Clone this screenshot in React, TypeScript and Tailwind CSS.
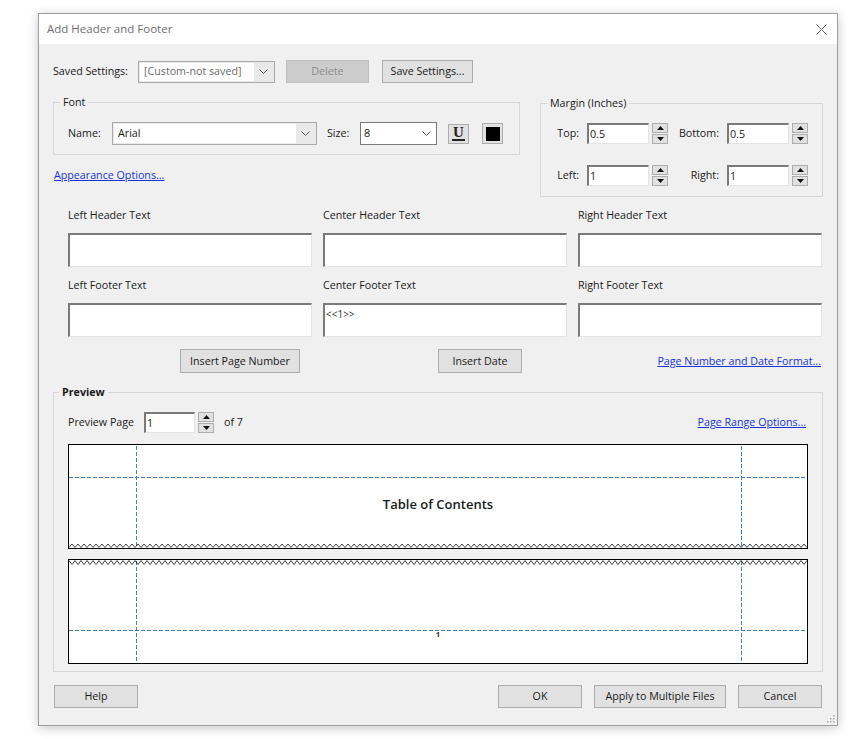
import React from 'react';

const inset =
  'border-t-2 border-l-2 border-r border-b border-t-[#7a7a7a] border-l-[#7a7a7a] border-r-[#e3e3e3] border-b-[#e3e3e3] bg-white';

function Chevron() {
  return (
    <svg width="9" height="5" viewBox="0 0 9 5">
      <path d="M0.5 0.5 L4.5 4.5 L8.5 0.5" fill="none" stroke="#5a5a5a" strokeWidth="1" />
    </svg>
  );
}

function Btn({
  children,
  className = '',
  disabled = false,
}: {
  children?: React.ReactNode;
  className?: string;
  disabled?: boolean;
}) {
  return (
    <button
      className={`flex items-center justify-center border leading-none ${
        disabled
          ? 'border-[#bfbfbf] bg-[#cccccc] text-[#8c8c8c]'
          : 'border-[#adadad] bg-[#e1e1e1] text-[#1a1a1a]'
      } ${className}`}
    >
      {children}
    </button>
  );
}

function Spinner() {
  return (
    <div className="ml-[3px] flex h-[21px] w-[16px] flex-col justify-between">
      <div className="flex h-[10px] items-center justify-center border border-[#adadad] bg-[#e1e1e1]">
        <svg width="7" height="4" viewBox="0 0 7 4">
          <path d="M3.5 0 L7 4 L0 4Z" fill="#111" />
        </svg>
      </div>
      <div className="flex h-[10px] items-center justify-center border border-[#adadad] bg-[#e1e1e1]">
        <svg width="7" height="4" viewBox="0 0 7 4">
          <path d="M0 0 L7 0 L3.5 4Z" fill="#111" />
        </svg>
      </div>
    </div>
  );
}

function MarginField({ label, value, labelW }: { label: string; value: string; labelW: string }) {
  return (
    <div className="flex items-center">
      <span className={`${labelW} text-right`}>{label}</span>
      <div className={`ml-[8px] flex h-[21px] w-[62px] items-center pl-[1px] ${inset}`}>{value}</div>
      <Spinner />
    </div>
  );
}

function TextBox({ label, value = '' }: { label: string; value?: string }) {
  return (
    <div className="flex flex-col">
      <span className="leading-[15px]">{label}</span>
      <div className={`mt-[10px] h-[34px] pl-[1px] pt-[2px] text-[10px] leading-[14px] text-[#333] ${inset}`}>
        {value}
      </div>
    </div>
  );
}

function zig(width: number, base: number, tip: number, period: number) {
  let d = `M0 ${base}`;
  for (let x = 0; x < width; x += period) {
    d += ` L${x + period / 2} ${tip} L${x + period} ${base}`;
  }
  return d;
}

function PreviewPage({ top }: { top: boolean }) {
  const dash = { stroke: '#4b80b3', strokeWidth: 1, strokeDasharray: '4 2' };
  const hy = top ? 32.5 : 70.5;
  return (
    <div className="relative ml-[14px] h-[105px] w-[740px] border border-black bg-white">
      <svg className="absolute inset-0" width="738" height="103">
        <line x1="0" y1={hy} x2="738" y2={hy} {...dash} />
        <line x1="67.5" y1="1" x2="67.5" y2="103" {...dash} />
        <line x1="672.5" y1="1" x2="672.5" y2="103" {...dash} />
        {top ? (
          <path d={zig(738, 102.5, 99, 6)} fill="none" stroke="#111" strokeWidth="0.8" />
        ) : (
          <path d={zig(738, 0.5, 4.5, 6)} fill="none" stroke="#111" strokeWidth="0.8" />
        )}
      </svg>
      {top ? (
        <div className="relative pt-[50px] text-center text-[13px] font-semibold leading-[18px] text-[#1a1a1a]">
          Table of Contents
        </div>
      ) : (
        <div className="relative pt-[71px] text-center text-[7px] font-bold leading-[8px] text-[#222]">1</div>
      )}
    </div>
  );
}

export default function App() {
  return (
    <div className="h-[739px] w-[860px] bg-white pl-[38px] pt-[13px] font-['Open_Sans',sans-serif] text-[10.7px] text-[#1a1a1a]">
      <div className="relative flex h-[713px] w-[800px] flex-col overflow-hidden border border-[#9d9d9d] bg-[#f0f0f0] shadow-[0_2px_10px_rgba(0,0,0,0.22)]">
        {/* Title bar */}
        <div className="flex h-[30px] shrink-0 items-center justify-between bg-white pl-[8px] pr-[10px]">
          <span className="text-[11.5px] text-[#6f6f6f]">Add Header and Footer</span>
          <svg width="11" height="11" viewBox="0 0 11 11">
            <path d="M0.5 0.5 L10.5 10.5 M10.5 0.5 L0.5 10.5" stroke="#6a6a6a" strokeWidth="1" />
          </svg>
        </div>

        <div className="flex flex-col px-[14px] pt-[16px]">
          {/* Saved settings */}
          <div className="flex h-[23px] items-center">
            <span className="w-[85px]">Saved Settings:</span>
            <div className="flex h-[22px] w-[137px] items-stretch border border-[#a9a9a9] bg-[#e9e9e9] p-[1px]">
              <div className="flex flex-1 items-center bg-white pl-[4px] text-[#6b6b6b]">[Custom-not saved]</div>
              <div className="flex w-[19px] items-center justify-center">
                <Chevron />
              </div>
            </div>
            <Btn disabled className="ml-[11px] h-[23px] w-[83px]">
              Delete
            </Btn>
            <Btn className="ml-[13px] h-[23px] w-[91px]">Save Settings...</Btn>
          </div>

          {/* Font + Margin */}
          <div className="mt-[12px] flex items-start">
            <div className="flex w-[467px] flex-col">
              <fieldset className="border border-[#d6d6d6] pb-[9px] pt-[13px]">
                <legend className="ml-[6px] px-[3px] leading-[14px]">Font</legend>
                <div className="flex items-center pl-[14px]">
                  <span className="w-[44px]">Name:</span>
                  <div className="flex h-[23px] w-[205px] items-stretch border border-[#a9a9a9] bg-[#e9e9e9] p-[1px]">
                    <div className="flex flex-1 items-center bg-white pl-[4px]">Arial</div>
                    <div className="flex w-[19px] items-center justify-center">
                      <Chevron />
                    </div>
                  </div>
                  <span className="ml-[10px] w-[33px]">Size:</span>
                  <div className="flex h-[23px] w-[77px] items-center justify-between border border-[#7a7a7a] bg-white pl-[3px] pr-[5px]">
                    <span>8</span>
                    <Chevron />
                  </div>
                  <Btn className="ml-[11px] h-[20px] w-[21px] flex-col">
                    <span className="font-['Liberation_Serif',serif] text-[15px] font-bold leading-[12px] text-[#222]">U</span>
                    <span className="mt-[1px] h-[2px] w-[13px] bg-[#222]" />
                  </Btn>
                  <Btn className="ml-[13px] h-[21px] w-[21px]">
                    <span className="h-[14px] w-[14px] bg-black" />
                  </Btn>
                </div>
              </fieldset>
              <a className="mt-[13px] ml-[1px] self-start leading-[15px] text-[#1a33d6] underline">Appearance Options...</a>
            </div>

            <fieldset className="ml-auto mt-[1px] w-[283px] border border-[#d6d6d6] pb-[10px] pt-[13px]">
              <legend className="ml-[6px] px-[3px] leading-[14px]">Margin (Inches)</legend>
              <div className="flex">
                <MarginField label="Top:" value="0.5" labelW="w-[38px]" />
                <MarginField label="Bottom:" value="0.5" labelW="w-[51px]" />
              </div>
              <div className="mt-[21px] flex">
                <MarginField label="Left:" value="1" labelW="w-[38px]" />
                <MarginField label="Right:" value="1" labelW="w-[51px]" />
              </div>
            </fieldset>
          </div>

          {/* Header / footer text */}
          <div className="mt-[11px] grid grid-cols-3 gap-x-[11px] pl-[15px] pr-[1px]">
            <TextBox label="Left Header Text" />
            <TextBox label="Center Header Text" />
            <TextBox label="Right Header Text" />
          </div>
          <div className="mt-[11px] grid grid-cols-3 gap-x-[11px] pl-[15px] pr-[1px]">
            <TextBox label="Left Footer Text" />
            <TextBox label="Center Footer Text" value="<<1>>" />
            <TextBox label="Right Footer Text" />
          </div>

          <div className="mt-[12px] flex h-[24px] items-center pl-[15px] pr-[2px]">
            <Btn className="ml-[112px] h-[24px] w-[120px]">Insert Page Number</Btn>
            <Btn className="ml-[138px] h-[24px] w-[84px]">Insert Date</Btn>
            <a className="ml-auto leading-[15px] text-[#1a33d6] underline">Page Number and Date Format...</a>
          </div>

          {/* Preview */}
          <fieldset className="mt-[12px] border border-[#d6d6d6] pb-[7px] pt-[13px]">
            <legend className="ml-[5px] px-[3px] font-bold leading-[14px]">Preview</legend>
            <div className="flex h-[21px] items-center pl-[14px] pr-[16px]">
              <span className="w-[76px]">Preview Page</span>
              <div className={`flex h-[21px] w-[51px] items-center pl-[1px] ${inset}`}>1</div>
              <Spinner />
              <span className="ml-[10px]">of 7</span>
              <a className="ml-auto leading-[15px] text-[#1a33d6] underline">Page Range Options...</a>
            </div>
            <div className="mt-[11px]">
              <PreviewPage top />
            </div>
            <div className="mt-[10px]">
              <PreviewPage top={false} />
            </div>
          </fieldset>

          {/* Bottom buttons */}
          <div className="mt-[13px] flex h-[23px] items-center pl-[1px] pr-[1px]">
            <Btn className="h-[23px] w-[84px]">Help</Btn>
            <Btn className="ml-auto h-[23px] w-[84px]">OK</Btn>
            <Btn className="ml-[12px] h-[23px] w-[132px]">Apply to Multiple Files</Btn>
            <Btn className="ml-[12px] h-[23px] w-[84px]">Cancel</Btn>
          </div>
        </div>

        {/* Resize grip */}
        <svg className="absolute bottom-[2px] right-[2px]" width="10" height="10" viewBox="0 0 10 10">
          {[
            [8, 2],
            [5, 5],
            [8, 5],
            [2, 8],
            [5, 8],
            [8, 8],
          ].map(([x, y], i) => (
            <rect key={i} x={x} y={y} width="1.5" height="1.5" fill="#a8a8a8" />
          ))}
        </svg>
      </div>
    </div>
  );
}
